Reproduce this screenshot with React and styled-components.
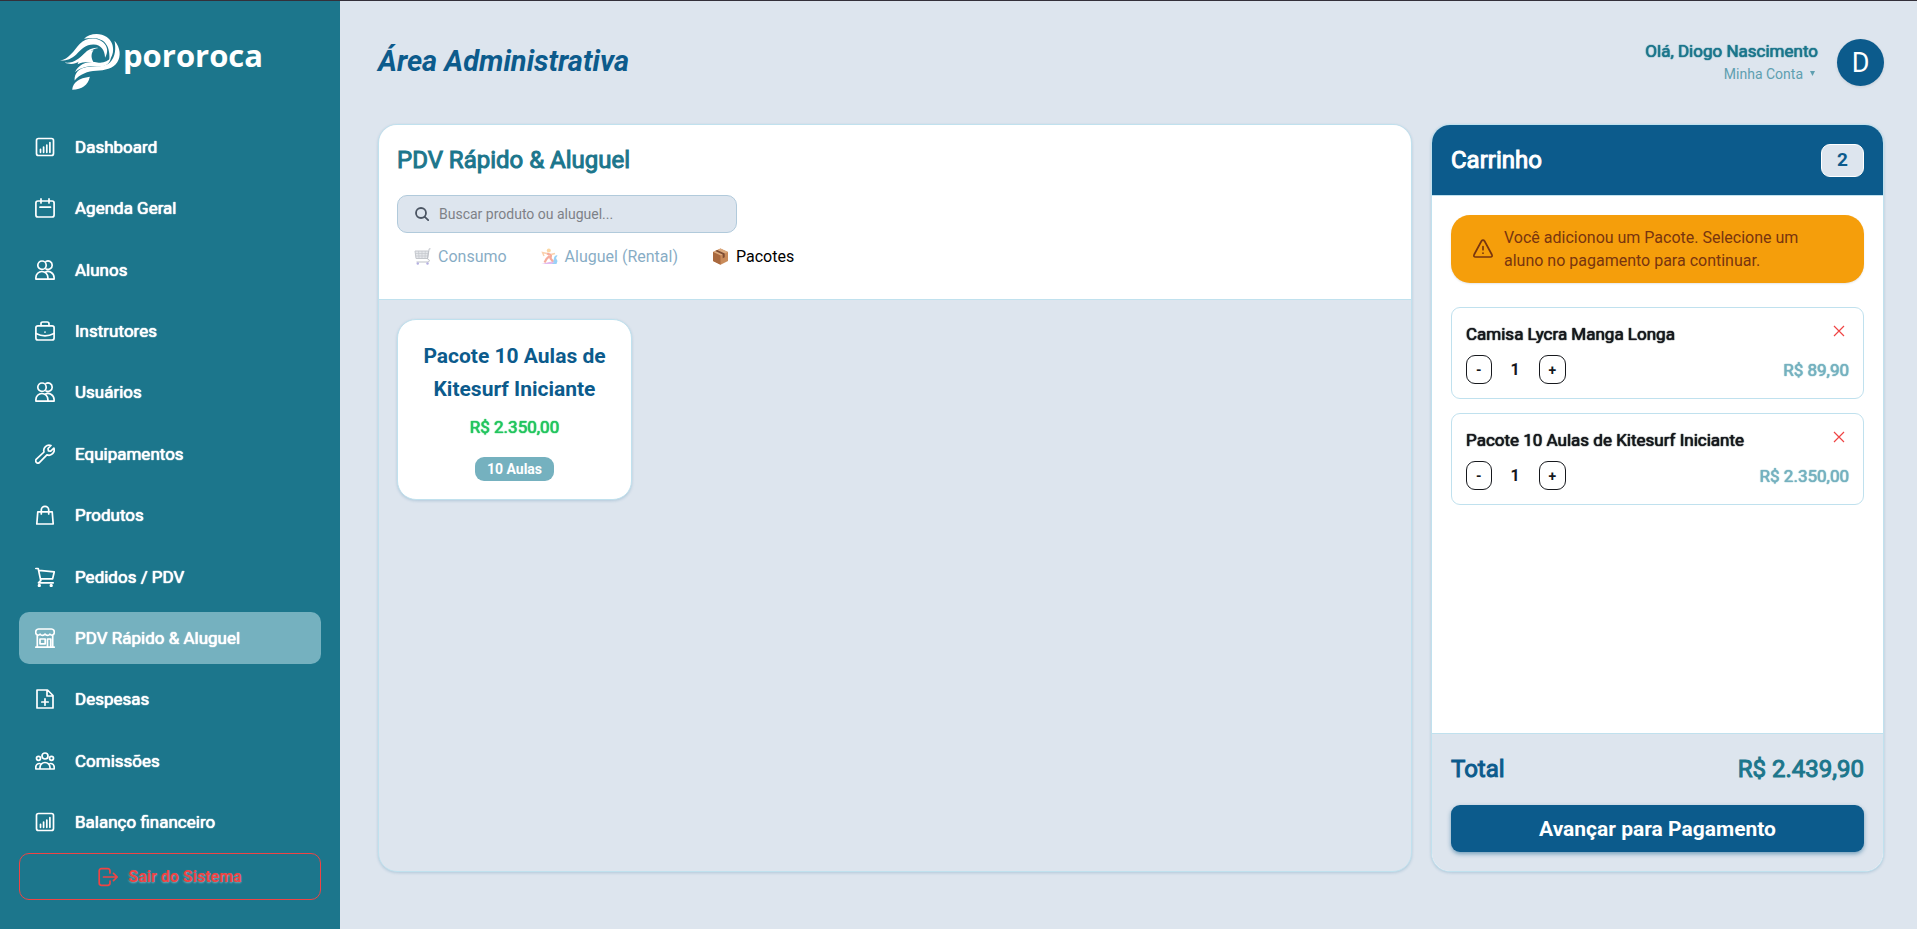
import React, { useState } from 'react';
import styled, { createGlobalStyle, css } from 'styled-components';

const teal = '#1c768c';
const mist = '#75b1bf';
const navy = '#0c5b8c';
const sand = '#dde5ee';
const line = '#c0e1ee';
const danger = '#ef4444';

const GlobalStyle = createGlobalStyle`
* {
  box-sizing: border-box;
}
body {
  margin: 0;
  background: ${sand};
  color: #16181d;
  font-family: Roboto, "Liberation Sans", sans-serif;
  font-size: 16px;
}
h1, h2, h3, p, ul {
  margin: 0;
  padding: 0;
}
button, input {
  font: inherit;
}
button {
  cursor: pointer;
}
`

const strongLabel = css`
font-size: 17px;
font-weight: 400;
text-shadow: 0 0 1px currentColor, 0 0 1px currentColor;
`

const heading = css`
font-size: 24px;
font-weight: 400;
line-height: 34px;
-webkit-text-stroke: 1px currentColor;
`

const Page = styled.div`
display: flex;
min-height: 100vh;
border-top: 1px solid #33303a;
`

const Sidebar = styled.aside`
display: flex;
flex-direction: column;
flex: 0 0 340px;
padding: 32px 19px 29px;
background: ${teal};
color: #fff;
`

const Logo = styled.a`
display: flex;
align-items: flex-start;
gap: 2px;
height: 88px;
padding-left: 41px;
color: #fff;
font: 700 31px/44px "Open Sans", sans-serif;
text-decoration: none;
`

const NavList = styled.ul`
display: flex;
flex: 1;
flex-direction: column;
justify-content: space-between;
list-style: none;
`

const NavItem = styled.a`
display: flex;
align-items: center;
gap: 20px;
height: 52px;
padding: 0 16px;
border-radius: 10px;
background: ${props => props.$active ? mist : 'transparent'};
color: #fff;
text-decoration: none;
${strongLabel}
`

const LogoutButton = styled.button`
display: flex;
align-items: center;
justify-content: center;
gap: 10px;
height: 47px;
margin-top: 5px;
border: 1px solid ${danger};
border-radius: 10px;
background: transparent;
color: ${danger};
font-weight: 700;
text-shadow: 0 1px 2px rgba(255, 255, 255, 0.4);
`

const Main = styled.main`
display: flex;
flex: 1;
flex-direction: column;
min-width: 0;
padding: 0 33px 57px 38px;
`

const TopBar = styled.header`
display: flex;
align-items: center;
justify-content: space-between;
height: 123px;
`

const PageTitle = styled.h1`
padding-bottom: 3px;
color: ${navy};
font-size: 29px;
font-style: italic;
font-weight: 700;
`

const Account = styled.div`
display: flex;
align-items: center;
gap: 19px;
`

const AccountText = styled.div`
display: flex;
flex-direction: column;
align-items: flex-end;
padding-bottom: 2px;
color: ${teal};
line-height: 24px;
& > span {
  ${strongLabel}
}
`

const AccountButton = styled.button`
display: flex;
align-items: center;
gap: 7px;
padding: 0 3px 0 0;
border: 0;
background: none;
color: #5f9fb0;
font-size: 14px;
line-height: 22px;
`

const Avatar = styled.div`
display: flex;
align-items: center;
justify-content: center;
width: 47px;
height: 47px;
border-radius: 50%;
background: ${navy};
box-shadow: 0 1px 3px rgba(0, 0, 0, 0.1);
color: #fff;
font-size: 27px;
`

const Columns = styled.div`
display: grid;
flex: 1;
grid-template-columns: minmax(0, 1fr) 453px;
gap: 19px;
`

const Panel = styled.section`
display: flex;
flex-direction: column;
overflow: hidden;
border: 1px solid ${line};
border-radius: 19px;
background: ${props => props.$white ? '#fff' : sand};
box-shadow: 0 1px 3px rgba(12, 91, 140, 0.2);
`

const CatalogHeader = styled.div`
height: 175px;
padding: 18px 18px 0;
border-bottom: 1px solid ${line};
background: #fff;
`

const PanelTitle = styled.h2`
color: ${props => props.$light ? '#fff' : teal};
${heading}
`

const SearchBox = styled.label`
display: flex;
align-items: center;
gap: 10px;
width: 340px;
height: 38px;
margin-top: 18px;
padding: 0 17px;
border: 1px solid #b1cadb;
border-radius: 10px;
background: ${sand};
color: #4b5563;
& > input {
  flex: 1;
  min-width: 0;
  padding: 0;
  border: 0;
  outline: 0;
  background: transparent;
  color: #16181d;
  font-size: 14px;
}
& > input::placeholder {
  color: #7d8187;
}
`

const Tabs = styled.div`
display: flex;
`

const Tab = styled.button`
display: flex;
align-items: center;
gap: 7px;
height: 46px;
padding: 0 17px;
border: 0;
background: none;
color: ${props => props.$active ? '#000' : navy};
opacity: ${props => props.$active ? 1 : 0.5};
`

const Catalog = styled.div`
display: grid;
grid-template-columns: repeat(auto-fill, 235px);
gap: 19px;
padding: 19px 18px;
`

const ProductCard = styled.button`
display: flex;
flex-direction: column;
align-items: center;
height: 181px;
padding: 20px 16px 19px;
border: 1px solid ${line};
border-radius: 19px;
background: #fff;
box-shadow: 0 1px 3px rgba(12, 91, 140, 0.2);
`

const ProductName = styled.h3`
color: ${navy};
font-size: 21px;
font-weight: 700;
line-height: 33px;
`

const ProductPrice = styled.p`
padding-top: 9px;
color: #22c55e;
line-height: 24px;
${strongLabel}
`

const ProductTag = styled.span`
margin-top: 18px;
padding: 0 12px;
border-radius: 9px;
background: ${mist};
color: #fff;
font-size: 14px;
font-weight: 700;
line-height: 24px;
`

const CartHeader = styled.div`
display: flex;
align-items: center;
justify-content: space-between;
height: 71px;
padding: 0 19px;
border-bottom: 1px solid ${line};
background: ${navy};
`

const CartCount = styled.span`
width: 43px;
height: 33px;
border: 1px solid #fff;
border-radius: 9px;
background: ${sand};
color: ${navy};
font-size: 19px;
font-weight: 700;
line-height: 30px;
text-align: center;
`

const CartBody = styled.div`
display: flex;
flex: 1;
flex-direction: column;
padding: 19px;
`

const Alert = styled.div`
display: flex;
align-items: center;
gap: 11px;
margin-bottom: 24px;
padding: 11px 44px 11px 22px;
border-radius: 19px;
background: #f59e0b;
box-shadow: 0 1px 2px rgba(0, 0, 0, 0.1);
color: #78350f;
line-height: 23px;
& > svg {
  flex: none;
}
`

const CartItem = styled.div`
display: flex;
flex-direction: column;
gap: 7px;
margin-bottom: 14px;
padding: 12px 14px 14px;
border: 1px solid ${line};
border-radius: 9px;
`

const CartRow = styled.div`
display: flex;
align-items: center;
justify-content: space-between;
`

const CartName = styled.h3`
line-height: 28px;
${strongLabel}
`

const RemoveButton = styled.button`
display: flex;
align-self: flex-start;
height: 22px;
padding: 5px 4px;
border: 0;
background: none;
color: ${danger};
`

const Quantity = styled.div`
display: flex;
align-items: center;
& > span {
  width: 47px;
  font-weight: 700;
  text-align: center;
}
`

const StepButton = styled.button`
height: 29px;
padding: 0 9px;
border: 1px solid #16181d;
border-radius: 9px;
background: #fff;
color: #16181d;
font-size: 14px;
font-weight: 700;
`

const CartPrice = styled.span`
color: ${mist};
${strongLabel}
`

const CartFooter = styled.div`
padding: 18px 19px 19px;
border-top: 1px solid ${line};
background: ${sand};
`

const TotalRow = styled.div`
display: flex;
justify-content: space-between;
margin-bottom: 19px;
color: ${teal};
${heading}
& > span:first-child {
  color: ${navy};
}
`

const CheckoutButton = styled.button`
width: 100%;
height: 47px;
border: 0;
border-radius: 9px;
background: ${navy};
box-shadow: 0 2px 4px rgba(12, 91, 140, 0.5);
color: #fff;
font-size: 21px;
font-weight: 700;
`

const Icon = ({ children }) => (
  <svg width='20' height='20' viewBox='0 0 20 20' fill='none' stroke='currentColor' strokeWidth='1.7' strokeLinecap='round' strokeLinejoin='round' aria-hidden='true'>
    {children}
  </svg>
)

const ChartIcon = () => (
  <Icon>
    <rect x='1.5' y='1.5' width='17' height='17' rx='2' />
    <path d='M5.5 15.3v-3M8.6 15.3V10M11.8 15.3V8M14.9 15.3V5.5' />
  </Icon>
)

const CalendarIcon = () => (
  <Icon>
    <rect x='.9' y='3' width='18.2' height='16' rx='2' />
    <path d='M6 .9v4M14 .9v4M5 9.2h10.5' />
  </Icon>
)

const UsersIcon = () => (
  <Icon>
    <circle cx='7' cy='5.2' r='4.2' />
    <path d='M11 1.5a4.2 4.2 0 1 1 0 7.4M.9 19.1v-1.6a6 6 0 0 1 12 0v1.6zM10.5 12a6.2 6.2 0 0 1 8.6 5.5v1.6h-6.2' />
  </Icon>
)

const BriefcaseIcon = () => (
  <Icon>
    <rect x='.9' y='4.8' width='18.2' height='14.2' rx='2' />
    <path d='M6 4.5V2.8C6 1.6 6.6 1 7.8 1h4.4c1.2 0 1.8.6 1.8 1.8v1.7M1 12.5c5.5 2.8 12.5 2.8 18 0M10 11v.1' />
  </Icon>
)

const WrenchIcon = () => (
  <Icon>
    <path d='M16 1.5 13 4.5l.4 2.3 2.3.4 3.2-3.1a5.3 5.3 0 0 1-7 6.7l-7.3 7.6a2.2 2.2 0 0 1-3.2-3.2L9 8a5.3 5.3 0 0 1 7-6.5z' />
  </Icon>
)

const BagIcon = () => (
  <Icon>
    <path d='M2.8 6.8h14.4l1 12.2H1.8zM6.3 9V5a3.7 3.7 0 0 1 7.4 0v4' />
  </Icon>
)

const CartIcon = () => (
  <Icon>
    <path d='M.8 1.5h2.4l2.6 12.2M4 3.3l15.3 1.5-1.7 7-12.2-.2M5.8 13.4l-2.3 2.4h14.7' />
    <circle cx='4.3' cy='18.5' r='.8' />
    <circle cx='16.2' cy='18.5' r='.8' />
  </Icon>
)

const StoreIcon = () => (
  <Icon>
    <path d='M3.5 1h13c2 0 3.200 2 2.700 4.200-.4 2.300-3.200 2.600-4.300.9-1.100 1.700-3.700 1.700-4.900 0-1.200 1.700-3.800 1.700-4.900 0C4 7.800 1.200 7.500.8 5.200.3 3 1.500 1 3.500 1zM2.300 8v11M17.700 8v11M.8 19.200h18.400M5 11h5.200v4.800H5zM12.500 19v-8h3.200v8' />
  </Icon>
)

const FileIcon = () => (
  <Icon>
    <path d='M2 1h10.5L18 6.500V19H2zM12 1v6h6M10 9.800v6.400M6.800 13h6.400' />
  </Icon>
)

const TeamIcon = () => (
  <Icon>
    <circle cx='10' cy='5' r='3' />
    <circle cx='3.5' cy='7.3' r='2' />
    <circle cx='16.5' cy='7.3' r='2' />
    <path d='M5 18v-1.500a5 5 0 0 1 10 0V18zM5 18H.8v-1.800c0-2.200 1.500-3.800 4-3.700M15 18h4.200v-1.800c0-2.200-1.500-3.800-4-3.700' />
  </Icon>
)

const ExitIcon = () => (
  <Icon>
    <path d='M12 6V4c0-1.500-.8-2.300-2.300-2.300H3.500C2 1.700 1.200 2.500 1.200 4v12c0 1.500.8 2.300 2.300 2.300h6.200c1.500 0 2.300-.8 2.300-2.300v-2M5.500 10H19M15.500 6.300 19.200 10l-3.700 3.700' />
  </Icon>
)

const WarningIcon = () => (
  <Icon>
    <path d='M8.500 2 1.200 15.500C.5 17 1 18 2.600 18h14.800c1.600 0 2.100-1 1.400-2.500L11.500 2c-.8-1.200-2.200-1.200-3 0zM10 7.500v3.200M10 14v.2' />
  </Icon>
)

const SearchIcon = () => (
  <svg width='14' height='14' viewBox='0 0 14 14' fill='none' stroke='currentColor' strokeWidth='1.8' strokeLinecap='round' aria-hidden='true'>
    <circle cx='6' cy='6' r='5' />
    <path d='m9.8 9.8 3.4 3.4' />
  </svg>
)

const CloseIcon = () => (
  <svg width='12' height='12' viewBox='0 0 12 12' fill='none' stroke='currentColor' strokeWidth='1.2' aria-hidden='true'>
    <path d='m1 1 10 10M11 1 1 11' />
  </svg>
)

const CaretIcon = () => (
  <svg width='5' height='5' viewBox='0 0 5 5' fill='currentColor' aria-hidden='true'>
    <path d='M0 0h5L2.5 5z' />
  </svg>
)

const WaveMark = () => (
  <svg width='61' height='57' viewBox='32 22 180 168' fill='#fff' aria-hidden='true'>
    <path d='M32 103C58 99 72 74 90 54 110 35 140 33 160 50c14 13 14 30 5 45-1-24-13-38-33-39-23-1-37 14-52 29-15 14-30 19-48 18z' />
    <path d='M46 109c27 3 42-12 57-26 13-13 27-19 42-17-20 3-29 14-39 25-13 14-33 30-60 18z' />
    <path d='M103 39c14-15 46-20 67-5 22 15 25 47 7 70 3-26-2-48-20-60-15-9-34-9-54-5z' />
    <path d='M193 45c18 21 19 47 8 63-12 19-37 24-62 25-26 2-48 9-64 29-1-23 14-36 36-40 26-4 53 2 69-14 16-16 17-40 13-63z' />
    <path d='M84 114c6-20 20-36 47-42-9 13-7 27 2 38-16-4-34-3-49 4z' />
    <path d='M76 138c14-28 40-33 66-29 19 3 31-4 40-13-3 17-16 25-34 25-30-3-54 1-72 17z' />
    <path d='M68 189c2-22 20-34 52-38-5 24-23 38-52 38z' />
  </svg>
)

const ShoppingEmoji = () => (
  <svg width='17' height='17' viewBox='0 0 17 17' fill='none' aria-hidden='true'>
    <path d='M1 3h13.5l-1 7.500H2z' fill='#ccd0d8' stroke='#8a909b' />
    <path d='M4.5 3 5 10M8 3v7M11.3 3 11 10M1.3 5.500h13M1.700 8h12.200' stroke='#8a909b' strokeWidth='.7' />
    <path d='M16.5.8h-1.300L13.500 11l2 1.300-1 1.700H2.500' stroke='#7f8592' />
    <circle cx='3.8' cy='15.5' r='1.2' fill='#6b62c4' />
    <circle cx='13.5' cy='15.5' r='1.2' fill='#6b62c4' />
  </svg>
)

const SurfEmoji = () => (
  <svg width='17' height='17' viewBox='0 0 17 17' fill='none' aria-hidden='true'>
    <path d='M7 16c5 0 5.500-3 6-6 .5-2 2-3 3.500-2.500L15 10l1.500 3-1 3z' fill='#35a7f0' />
    <path d='M.5 16c3-.5 6-2 11-2.500l2 1L10 16z' fill='#c878de' />
    <path d='M6 5.500 10 7l-.5 3.500 2.500 3M8.500 8 5.500 11l-2 3.500' stroke='#ee5b3c' strokeWidth='2.2' />
    <path d='M6 5.500 1.500 4.500 3 8M10 6.500l4-1' stroke='#f5a35c' strokeWidth='1.4' />
    <circle cx='7.8' cy='2.5' r='2' fill='#f7b04a' />
  </svg>
)

const BoxEmoji = () => (
  <svg width='17' height='17' viewBox='0 0 17 17' aria-hidden='true'>
    <path d='M8.500.5 16 4v9l-7.500 3.700L1 13V4z' fill='#c98b5a' />
    <path d='M8.500.5 16 4 8.500 7.500 1 4z' fill='#dba97d' />
    <path d='M8.500 7.500V16.700L1 13V4z' fill='#a9693f' />
    <path d='m3.200 3 7.500 3.500v3.700l2-1V5.600L5.200 2z' fill='#7d4c33' />
  </svg>
)

const menu = [
  ['Dashboard', ChartIcon],
  ['Agenda Geral', CalendarIcon],
  ['Alunos', UsersIcon],
  ['Instrutores', BriefcaseIcon],
  ['Usuários', UsersIcon],
  ['Equipamentos', WrenchIcon],
  ['Produtos', BagIcon],
  ['Pedidos / PDV', CartIcon],
  ['PDV Rápido & Aluguel', StoreIcon],
  ['Despesas', FileIcon],
  ['Comissões', TeamIcon],
  ['Balanço financeiro', ChartIcon],
]

const tabs = [
  ['Consumo', ShoppingEmoji],
  ['Aluguel (Rental)', SurfEmoji],
  ['Pacotes', BoxEmoji],
]

const money = (value) => 'R$ ' + value.toFixed(2).replace('.', ',').replace(/\B(?=(\d{3})+(?=,))/g, '.')

const App = () => {
  const [tab, setTab] = useState('Pacotes')
  const [search, setSearch] = useState('')
  const [cart, setCart] = useState([
    { name: 'Camisa Lycra Manga Longa', price: 89.9, amount: 1 },
    { name: 'Pacote 10 Aulas de Kitesurf Iniciante', price: 2350, amount: 1 },
  ])

  const total = cart.reduce((sum, item) => sum + item.price * item.amount, 0)

  function changeAmount(name, step) {
    setCart(cart.map(item => item.name === name ? { ...item, amount: Math.max(1, item.amount + step) } : item))
  }

  function removeItem(name) {
    setCart(cart.filter(item => item.name !== name))
  }

  return (
    <Page>
      <GlobalStyle />
      <Sidebar>
        <Logo href='#'>
          <WaveMark />
          pororoca
        </Logo>
        <NavList>
          {menu.map(([label, MenuIcon]) => (
            <li key={label}>
              <NavItem href='#' $active={label === 'PDV Rápido & Aluguel'}>
                <MenuIcon />
                {label}
              </NavItem>
            </li>
          ))}
        </NavList>
        <LogoutButton>
          <ExitIcon />
          Sair do Sistema
        </LogoutButton>
      </Sidebar>
      <Main>
        <TopBar>
          <PageTitle>Área Administrativa</PageTitle>
          <Account>
            <AccountText>
              <span>Olá, Diogo Nascimento</span>
              <AccountButton>
                Minha Conta
                <CaretIcon />
              </AccountButton>
            </AccountText>
            <Avatar>D</Avatar>
          </Account>
        </TopBar>
        <Columns>
          <Panel>
            <CatalogHeader>
              <PanelTitle>PDV Rápido & Aluguel</PanelTitle>
              <SearchBox>
                <SearchIcon />
                <input
                  type='text'
                  aria-label='Buscar produto ou aluguel'
                  placeholder='Buscar produto ou aluguel...'
                  value={search}
                  onChange={(e) => setSearch(e.target.value)}
                />
              </SearchBox>
              <Tabs>
                {tabs.map(([label, Emoji]) => (
                  <Tab key={label} $active={tab === label} onClick={() => setTab(label)}>
                    <Emoji />
                    {label}
                  </Tab>
                ))}
              </Tabs>
            </CatalogHeader>
            <Catalog>
              <ProductCard>
                <ProductName>Pacote 10 Aulas de Kitesurf Iniciante</ProductName>
                <ProductPrice>{money(2350)}</ProductPrice>
                <ProductTag>10 Aulas</ProductTag>
              </ProductCard>
            </Catalog>
          </Panel>
          <Panel $white>
            <CartHeader>
              <PanelTitle $light>Carrinho</PanelTitle>
              <CartCount>{cart.length}</CartCount>
            </CartHeader>
            <CartBody>
              <Alert role='alert'>
                <WarningIcon />
                <p>Você adicionou um Pacote. Selecione um aluno no pagamento para continuar.</p>
              </Alert>
              {cart.map(item => (
                <CartItem key={item.name}>
                  <CartRow>
                    <CartName>{item.name}</CartName>
                    <RemoveButton aria-label='Remover' onClick={() => removeItem(item.name)}>
                      <CloseIcon />
                    </RemoveButton>
                  </CartRow>
                  <CartRow>
                    <Quantity>
                      <StepButton onClick={() => changeAmount(item.name, -1)}>-</StepButton>
                      <span>{item.amount}</span>
                      <StepButton onClick={() => changeAmount(item.name, 1)}>+</StepButton>
                    </Quantity>
                    <CartPrice>{money(item.price * item.amount)}</CartPrice>
                  </CartRow>
                </CartItem>
              ))}
            </CartBody>
            <CartFooter>
              <TotalRow>
                <span>Total</span>
                <span>{money(total)}</span>
              </TotalRow>
              <CheckoutButton>Avançar para Pagamento</CheckoutButton>
            </CartFooter>
          </Panel>
        </Columns>
      </Main>
    </Page>
  )
}

export default App;
